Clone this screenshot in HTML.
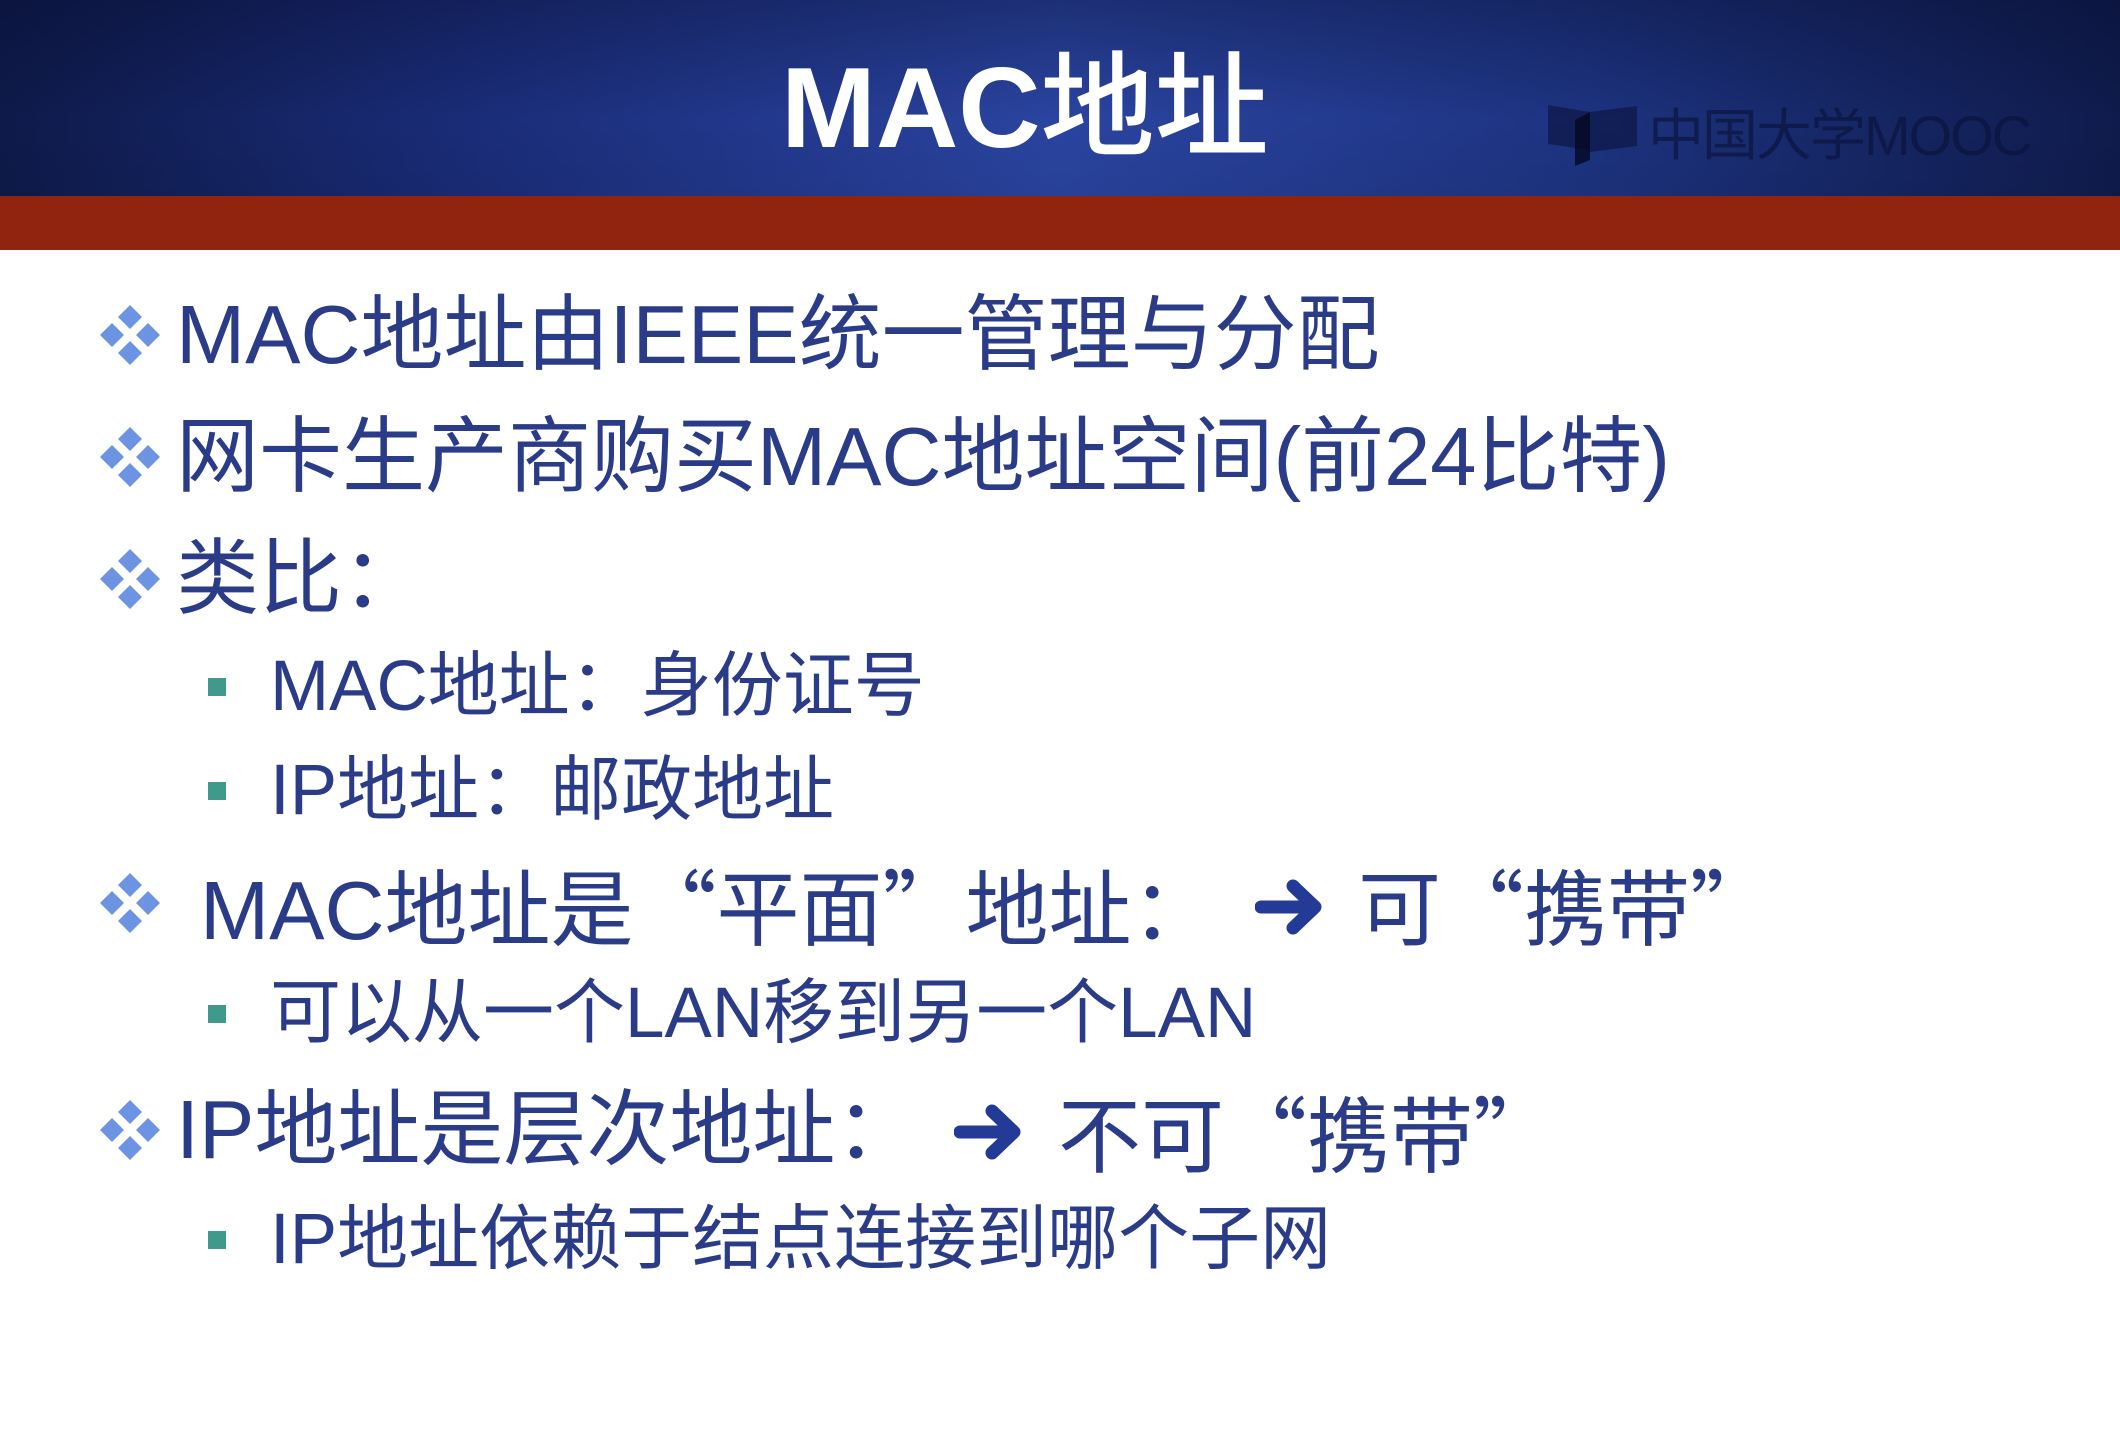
<!DOCTYPE html>
<html><head><meta charset="utf-8">
<style>
html,body{margin:0;padding:0}
body{width:2120px;height:1438px;position:relative;overflow:hidden;background:#fff;font-family:"Liberation Sans","Noto Sans CJK SC",sans-serif}
.hdr{position:absolute;left:0;top:0;width:2120px;height:196px;background:linear-gradient(90deg,#0e1a4a 0%,#1a2c78 22%,#2a44a0 50%,#1d3380 75%,#0f1b4c 100%)}
.hdr2{position:absolute;left:0;top:0;width:2120px;height:196px;background:linear-gradient(180deg,rgba(5,10,40,.35) 0%,rgba(0,0,0,0) 60%,rgba(0,0,0,.05) 100%)}
.red{position:absolute;left:0;top:196px;width:2120px;height:54px;background:#90240f}
.title{position:absolute;left:781px;top:44px;color:#fff;font-weight:bold;font-size:114px;line-height:130px;white-space:nowrap}
.title .c{font-weight:500}
.logo{position:absolute;left:1648px;top:104px;font-size:56px;line-height:64px;color:rgba(10,18,60,.65);letter-spacing:-2px}
.t{position:absolute;color:#2a3b88;white-space:nowrap}
.m{font-size:83px;line-height:84px}
.s{font-size:71px;line-height:74px}
.q{font-family:"Noto Sans CJK SC",sans-serif}
.sq{position:absolute;width:18px;height:18px;background:#3f9a8c}
</style></head><body>
<div class="hdr"></div><div class="hdr2"></div>
<div class="red"></div>
<div class="title">MAC<span class="c">地址</span></div>
<svg style="position:absolute;left:1545px;top:100px" width="100" height="70" viewBox="0 0 100 70">
<path d="M3 5 L45 12 L45 50 L3 44 Z" fill="rgba(10,18,60,.6)"/>
<path d="M45 12 L92 6 L92 46 L45 52 Z" fill="rgba(10,18,60,.6)"/>
<path d="M30 20 L45 12 L45 60 L30 66 Z" fill="rgba(5,8,35,.8)"/>
</svg>
<div class="logo">中国大学MOOC</div>

<svg width="0" height="0" style="position:absolute"><defs>
<g id="d"><path d="M30 0L42 12L30 24L18 12Z M12 18L24 30L12 42L0 30Z M48 18L60 30L48 42L36 30Z M30 36L42 48L30 60L18 48Z" fill="#6d94e2"/></g>
</defs></svg>

<svg style="position:absolute;left:100px;top:305px" width="60" height="60"><use href="#d"/></svg>
<div class="t m" style="left:176px;top:293px">MAC地址由IEEE统一管理与分配</div>

<svg style="position:absolute;left:100px;top:427px" width="60" height="60"><use href="#d"/></svg>
<div class="t m" style="left:176px;top:415px">网卡生产商购买MAC地址空间(前24比特)</div>

<svg style="position:absolute;left:100px;top:549px" width="60" height="60"><use href="#d"/></svg>
<div class="t m" style="left:176px;top:537px">类比：</div>

<div class="sq" style="left:208px;top:678px"></div>
<div class="t s" style="left:270px;top:650px">MAC地址：身份证号</div>
<div class="sq" style="left:208px;top:782px"></div>
<div class="t s" style="left:270px;top:754px">IP地址：邮政地址</div>

<svg style="position:absolute;left:100px;top:873px" width="60" height="60"><use href="#d"/></svg>
<div class="t m" style="left:200px;top:861px">MAC地址是<span class="q">“平面”</span>地址：</div>
<svg style="position:absolute;left:1255px;top:878px" width="72" height="58" viewBox="0 0 72 58"><path d="M6 29 H58 M38 8 L60 29 L38 50" fill="none" stroke="#233a96" stroke-width="13" stroke-linecap="round" stroke-linejoin="round"/></svg>
<div class="t m" style="left:1358px;top:861px">可<span class="q">“携带”</span></div>

<div class="sq" style="left:208px;top:1005px"></div>
<div class="t s" style="left:270px;top:977px">可以从一个LAN移到另一个LAN</div>

<svg style="position:absolute;left:100px;top:1100px" width="60" height="60"><use href="#d"/></svg>
<div class="t m" style="left:176px;top:1088px">IP地址是层次地址：</div>
<svg style="position:absolute;left:954px;top:1103px" width="72" height="58" viewBox="0 0 72 58"><path d="M6 29 H58 M38 8 L60 29 L38 50" fill="none" stroke="#233a96" stroke-width="13" stroke-linecap="round" stroke-linejoin="round"/></svg>
<div class="t m" style="left:1058px;top:1088px">不可<span class="q">“携带”</span></div>

<div class="sq" style="left:208px;top:1231px"></div>
<div class="t s" style="left:270px;top:1203px">IP地址依赖于结点连接到哪个子网</div>
</body></html>
